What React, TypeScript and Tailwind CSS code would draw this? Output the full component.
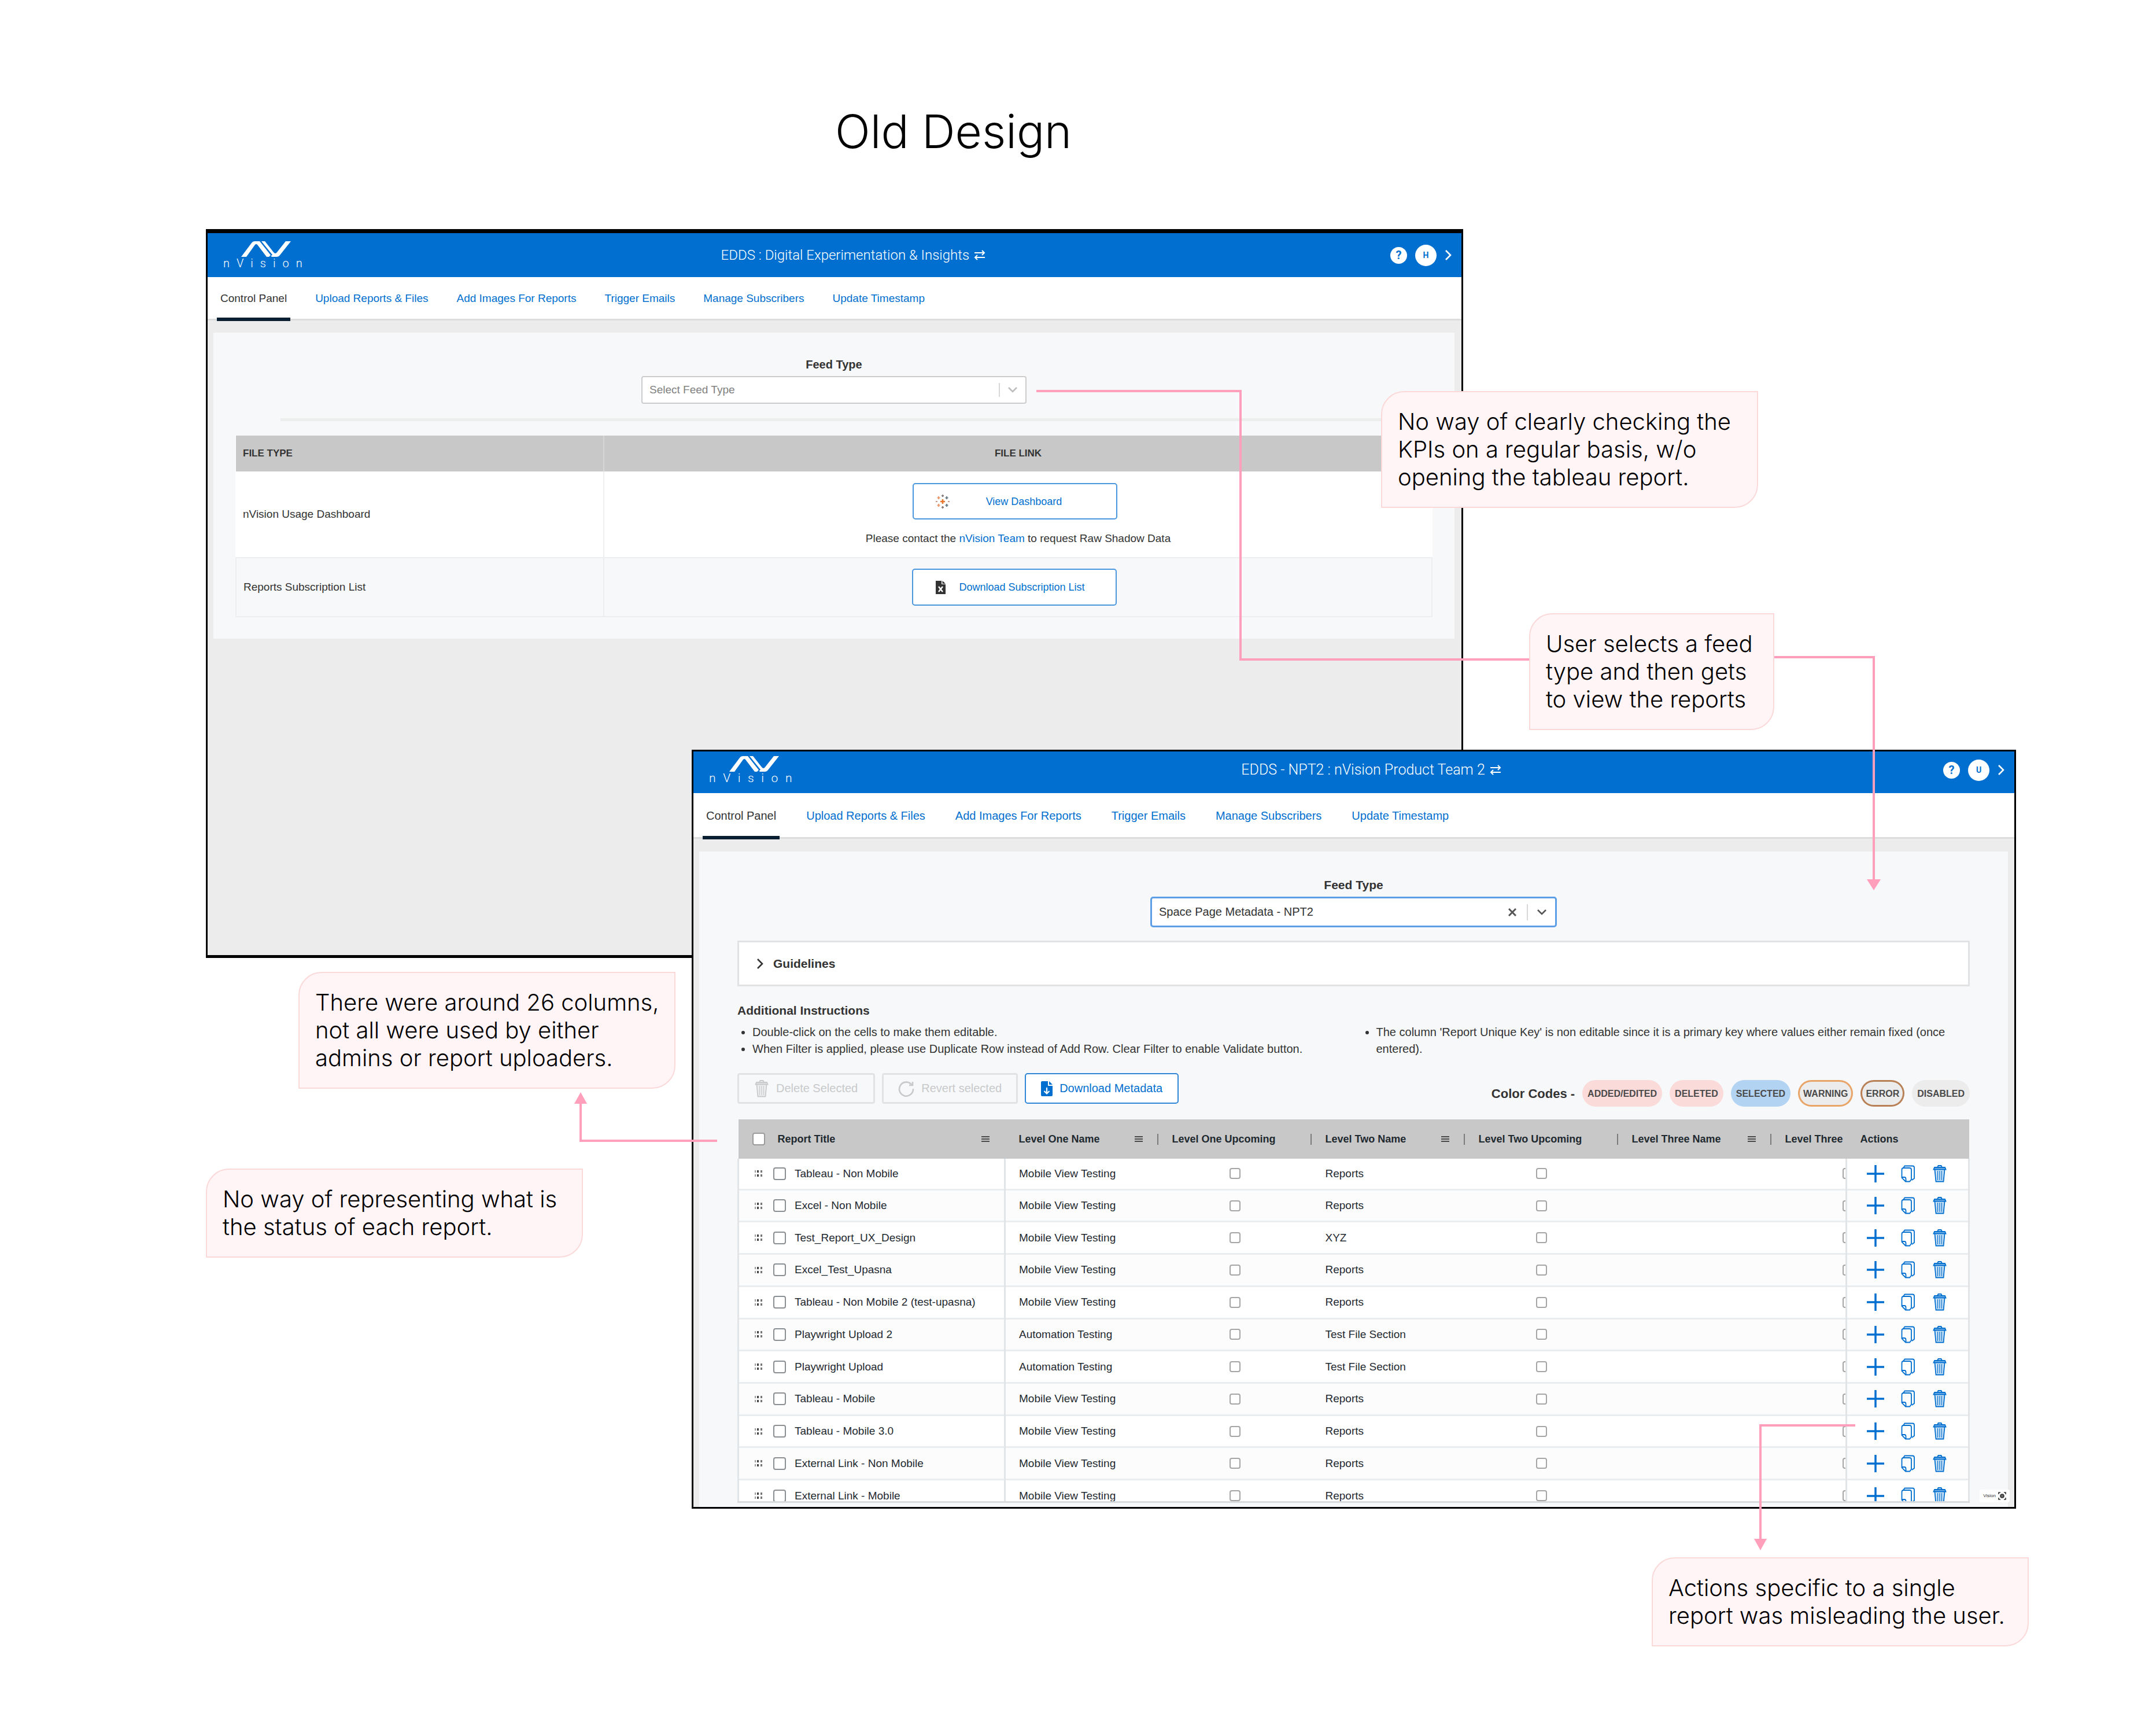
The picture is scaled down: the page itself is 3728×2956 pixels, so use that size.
import type { ReactNode } from 'react'

const NAV = [
  'Control Panel',
  'Upload Reports & Files',
  'Add Images For Reports',
  'Trigger Emails',
  'Manage Subscribers',
  'Update Timestamp',
]

const ROWS = [
  { title: 'Tableau - Non Mobile', one: 'Mobile View Testing', two: 'Reports' },
  { title: 'Excel - Non Mobile', one: 'Mobile View Testing', two: 'Reports' },
  { title: 'Test_Report_UX_Design', one: 'Mobile View Testing', two: 'XYZ' },
  { title: 'Excel_Test_Upasna', one: 'Mobile View Testing', two: 'Reports' },
  { title: 'Tableau - Non Mobile 2 (test-upasna)', one: 'Mobile View Testing', two: 'Reports' },
  { title: 'Playwright Upload 2', one: 'Automation Testing', two: 'Test File Section' },
  { title: 'Playwright Upload', one: 'Automation Testing', two: 'Test File Section' },
  { title: 'Tableau - Mobile', one: 'Mobile View Testing', two: 'Reports' },
  { title: 'Tableau - Mobile 3.0', one: 'Mobile View Testing', two: 'Reports' },
  { title: 'External Link - Non Mobile', one: 'Mobile View Testing', two: 'Reports' },
  { title: 'External Link - Mobile', one: 'Mobile View Testing', two: 'Reports' },
]

const COLOR_CODES = [
  { label: 'ADDED/EDITED', className: 'bg-[#fbdada]' },
  { label: 'DELETED', className: 'bg-[#fbdada]' },
  { label: 'SELECTED', className: 'bg-[#b3d3f3]' },
  { label: 'WARNING', className: 'bg-[#ececec] ring-3 ring-inset ring-[#e9a468]' },
  { label: 'ERROR', className: 'bg-[#ececec] ring-3 ring-inset ring-[#b98056]' },
  { label: 'DISABLED', className: 'bg-[#ececec]' },
]

function Logo({ className }: { className: string }) {
  return (
    <div className={`flex flex-col items-center text-white ${className}`}>
      <svg viewBox="0 0 86 27" className="w-[86px] h-[27px]" fill="currentColor" aria-hidden="true">
        <path d="M0 27 L18 3 Q20 0 24 0 H32 L51 24 L48 27 H44 L28 6 Q26 4 24 6 L9 27 Z" />
        <path d="M35 0 H41 L56 19 Q59 23 62 19 L77 0 H86 L67 24 Q65 27 61 27 H53 L51.500 25.500 L54 23.500 Z" />
      </svg>
      <span className="leading-[22px] font-light tracking-[0.6em]">nVision</span>
    </div>
  )
}

function SwapIcon() {
  return (
    <svg
      viewBox="0 0 20 18"
      className="w-[20px] h-[18px]"
      fill="none"
      stroke="currentColor"
      strokeWidth="2"
      aria-hidden="true"
    >
      <path d="M1 5 H18 M14 1 L18 5 L14 9" />
      <path d="M19 13 H2 M6 9 L2 13 L6 17" />
    </svg>
  )
}

function Chevron() {
  return (
    <svg viewBox="0 0 12 20" className="w-[12px] h-[20px]" fill="none" stroke="currentColor" strokeWidth="2.600" aria-hidden="true">
      <path d="M2 2 L10 10 L2 18" />
    </svg>
  )
}

function ChevronDown() {
  return (
    <svg viewBox="0 0 16 10" className="w-[16px] h-[10px]" fill="none" stroke="currentColor" strokeWidth="2.600" aria-hidden="true">
      <path d="M1 1 L8 8 L15 1" />
    </svg>
  )
}

function AppHeader({
  title,
  initial,
  className,
  logoClassName,
}: {
  title: string
  initial: string
  className: string
  logoClassName: string
}) {
  return (
    <header
      className={`flex items-center justify-between bg-[#006fcf] pl-[27px] pr-[17px] font-['Roboto',sans-serif] text-white ${className}`}
    >
      <Logo className={logoClassName} />
      <button className="flex items-center gap-2 leading-7 font-light">
        {title}
        <SwapIcon />
      </button>
      <div className="flex items-center gap-[14px]">
        <button className="w-[29px] h-[29px] rounded-full bg-white text-[#006fcf] text-[20px] leading-[29px] font-bold">?</button>
        <button className="w-[37px] h-[37px] rounded-full bg-white text-[#006fcf] text-[14px] leading-[37px] font-bold">
          {initial}
        </button>
        <Chevron />
      </div>
    </header>
  )
}

function NavTabs({ className }: { className: string }) {
  return (
    <nav className={`flex items-stretch bg-white border-b-3 border-[#dcdcdc] pl-[16px] text-[#006fcf] ${className}`}>
      {NAV.map((item, i) => (
        <a
          key={item}
          href="#"
          className={`-mb-[4px] flex items-center px-[6px] whitespace-nowrap border-b-6 pt-1 ${
            i === 0 ? 'border-[#0b1f33] text-[#333333]' : 'border-transparent'
          }`}
        >
          {item}
        </a>
      ))}
    </nav>
  )
}

function ControlPanelWindow() {
  return (
    <section className="absolute left-[356px] top-[396px] w-[2174px] h-[1260px] bg-[#ececec] border-x-3 border-t-7 border-b-5 border-black text-[19px] leading-6 text-[#333333]">
      <AppHeader
        title="EDDS : Digital Experimentation & Insights"
        initial="H"
        className="h-[76px] text-[24px]"
        logoClassName="mr-3 text-[20px]"
      />
      <NavTabs className="h-[75px] gap-[37px]" />

      <div className="ml-[10px] mr-[12px] mt-[21px] bg-[#f7f8fa] px-[38px] pt-[43px] pb-[37px]">
        <div className="flex flex-col items-center">
          <label htmlFor="feed-1" className="text-[20px] font-bold">
            Feed Type
          </label>
          <div className="relative mt-2 w-[666px]">
            <select
              id="feed-1"
              className="w-full h-[48px] appearance-none rounded-sm border-2 border-[#cccccc] bg-white pl-[12px] text-[#808080]"
            >
              <option>Select Feed Type</option>
            </select>
            <div className="pointer-events-none absolute inset-y-0 right-[16px] flex items-center gap-[14px] text-[#bdbdbd]">
              <span className="w-[2px] h-[24px] bg-[#d8d8d8]" />
              <ChevronDown />
            </div>
          </div>
        </div>

        <hr className="mt-[25px] mx-[78px] border-t-5 border-[#eceded]" />

        <table className="mt-[25px] w-full border-collapse bg-white">
          <thead className="bg-[#c8c8c8] text-[17px]">
            <tr className="h-[62px]">
              <th className="w-[636px] pl-[12px] text-left border-r-2 border-[#d6d6d6]">FILE TYPE</th>
              <th>FILE LINK</th>
            </tr>
          </thead>
          <tbody>
            <tr className="h-[149px]">
              <td className="pl-[12px] border-r-2 border-[#eceeef]">nVision Usage Dashboard</td>
              <td className="text-center">
                <button className="mr-3 inline-flex w-[354px] h-[63px] items-center rounded-[5px] border-2 border-[#4a97df] bg-white pl-[38px] text-[18px] text-[#006fcf]">
                  <TableauIcon />
                  <span className="flex-1 pr-[30px]">View Dashboard</span>
                </button>
                <p className="mt-[21px]">
                  Please contact the{' '}
                  <a href="#" className="text-[#006fcf]">
                    nVision Team
                  </a>{' '}
                  to request Raw Shadow Data
                </p>
              </td>
            </tr>
            <tr className="h-[102px] border-2 border-[#eceeef] bg-[#f7f8fa]">
              <td className="pl-[12px] border-r-2 border-[#eceeef]">Reports Subscription List</td>
              <td className="text-center">
                <button className="mr-3 inline-flex w-[354px] h-[64px] items-center rounded-[5px] border-2 border-[#4a97df] bg-white pl-[38px] text-[18px] text-[#006fcf]">
                  <ExcelIcon />
                  <span className="flex-1 pr-[30px]">Download Subscription List</span>
                </button>
              </td>
            </tr>
          </tbody>
        </table>
      </div>
    </section>
  )
}

function TableauIcon() {
  return (
    <svg viewBox="0 0 24 24" className="w-[24px] h-[24px]" fill="none" strokeWidth="2" aria-hidden="true">
      <path d="M12 8 V16 M8 12 H16" stroke="#e8762d" strokeWidth="2.600" />
      <path d="M5 3 V8 M2.500 5.500 H7.500 M5 16 V21 M2.500 18.500 H7.500" stroke="#eb9a6e" />
      <path d="M19 3 V8 M16.500 5.500 H21.500 M19 16 V21 M16.500 18.500 H21.500" stroke="#6d7f88" />
      <path d="M12 0 V4 M10 2 H14 M12 20 V24 M10 22 H14" stroke="#8d8080" />
      <path d="M0 12 H3 M21 12 H24" stroke="#c79a8a" />
    </svg>
  )
}

function ExcelIcon() {
  return (
    <svg viewBox="0 0 18 23" className="w-[18px] h-[23px]" aria-hidden="true">
      <path d="M1 0 H11 V6 H18 V23 H1 Z" fill="#333333" />
      <path d="M12.500 0 L18 5 H12.500 Z" fill="#333333" />
      <path d="M6 10 L13 19 M13 10 L6 19" stroke="white" strokeWidth="2.400" />
    </svg>
  )
}

function TrashIcon() {
  return (
    <svg viewBox="0 0 24 30" className="w-[24px] h-[30px]" fill="none" stroke="currentColor" strokeWidth="1.800" aria-hidden="true">
      <path d="M8 4 L9.500 1 H14.500 L16 4" />
      <path d="M1.500 7.500 L3 4 H21 L22.500 7.500 Z" fill="currentColor" fillOpacity="0.5" />
      <path d="M3.500 8 L5.500 28.500 H18.500 L20.500 8" fill="currentColor" fillOpacity="0.2" />
      <path d="M8.500 10 V26 M12 10 V26 M15.500 10 V26" strokeWidth="1.200" />
    </svg>
  )
}

function CopyIcon() {
  return (
    <svg viewBox="0 0 24 30" className="w-[24px] h-[30px]" fill="none" stroke="currentColor" strokeWidth="1.800" aria-hidden="true">
      <path d="M4 5 L6.500 1.500 H20 Q23 1.500 23 4.500 V23 L19 26" />
      <path d="M1.500 8 Q1.500 5 4.500 5 H15 Q18 5 18 8 V25 L15 28.500 H8 L1.500 22 Z" />
      <path d="M1.500 21 H6 Q8.500 21 8.500 24 V28" />
    </svg>
  )
}

function Checkbox({ label, className }: { label: string; className: string }) {
  return (
    <input
      type="checkbox"
      aria-label={label}
      className={`block shrink-0 appearance-none rounded-[4px] border-2 bg-white ${className}`}
    />
  )
}

function MenuIcon() {
  return (
    <svg viewBox="0 0 14 12" className="w-[14px] h-[12px]" stroke="#4a4a4a" strokeWidth="2" aria-hidden="true">
      <path d="M0 2 H14 M0 6 H14 M0 10 H14" />
    </svg>
  )
}

function ColumnHead({ children, menu }: { children: ReactNode; menu?: boolean }) {
  return (
    <th className="p-0 text-left">
      <div className="flex items-center w-[265px] pl-[24px]">
        <span className="flex-1">{children}</span>
        {menu && <MenuIcon />}
        <span className="ml-[25px] w-[2px] h-[19px] bg-[#7b7b7b]" />
      </div>
    </th>
  )
}

function ReportsGrid() {
  return (
    <div className="mt-[22px] h-[663px] overflow-hidden border-b-3 border-[#d9dcde]">
      <table className="w-full h-[680px] table-fixed border-collapse">
        <colgroup>
          <col />
          <col className="w-[265px]" />
          <col className="w-[265px]" />
          <col className="w-[265px]" />
          <col className="w-[265px]" />
          <col className="w-[265px]" />
          <col className="w-[130px]" />
          <col className="w-[212px]" />
        </colgroup>
        <thead className="bg-[#c8c8c8] text-[18px] text-[#1f2930]">
          <tr className="h-[68px]">
            <th className="p-0 text-left">
              <div className="flex items-center pl-[24px] pr-[27px]">
                <Checkbox label="Select all reports" className="w-[22px] h-[22px] border-[#9b9b9b]" />
                <span className="ml-[22px] flex-1">Report Title</span>
                <MenuIcon />
              </div>
            </th>
            <ColumnHead menu>Level One Name</ColumnHead>
            <ColumnHead>Level One Upcoming</ColumnHead>
            <ColumnHead menu>Level Two Name</ColumnHead>
            <ColumnHead>Level Two Upcoming</ColumnHead>
            <ColumnHead menu>Level Three Name</ColumnHead>
            <th className="p-0 pl-[24px] text-left whitespace-nowrap">Level Three</th>
            <th className="pl-[24px] text-left">Actions</th>
          </tr>
        </thead>
        <tbody className="text-[19px] leading-6 text-[#1f2930]">
          {ROWS.map((row) => (
            <tr key={row.title} className="bg-white even:bg-[#fcfcfc] border-b-3 border-[#e9edf0]">
              <td className="p-0 border-x-3 border-[#e2e5e8]">
                <div className="flex items-center pl-[26px]">
                  <svg viewBox="0 0 15 11" className="w-[15px] h-[11px]" aria-hidden="true">
                    <path d="M5 0 H8 V4 H5 Z M5 7 H8 V11 H5 Z" fill="#444444" />
                    <path d="M1 0 H3 V4 H1 Z M1 7 H3 V11 H1 Z" fill="#999999" />
                    <path d="M11 0 H14 V4 H11 Z M11 7 H14 V11 H11 Z" fill="#777777" />
                  </svg>
                  <Checkbox label={`Select ${row.title}`} className="ml-[18px] w-[22px] h-[22px] border-[#8a8f93]" />
                  <span className="ml-[15px] whitespace-nowrap">{row.title}</span>
                </div>
              </td>
              <td className="pl-[23px]">{row.one}</td>
              <td className="p-0">
                <Checkbox label="Level one upcoming" className="mx-auto w-[19px] h-[19px] border-[#a5a5a5]" />
              </td>
              <td className="pl-[24px]">{row.two}</td>
              <td className="p-0">
                <Checkbox label="Level two upcoming" className="mx-auto w-[19px] h-[19px] border-[#a5a5a5]" />
              </td>
              <td />
              <td className="p-0 overflow-hidden">
                <div className="w-[265px]">
                  <Checkbox label="Level three upcoming" className="mx-auto w-[19px] h-[19px] border-[#a5a5a5]" />
                </div>
              </td>
              <td className="p-0 border-x-3 border-[#e2e5e8]">
                <div className="flex items-center pl-[34px] text-[#006fcf]">
                  <button aria-label="Add row">
                    <svg viewBox="0 0 30 30" className="block w-[30px] h-[30px]" stroke="currentColor" strokeWidth="3.500" aria-hidden="true">
                      <path d="M15 0 V30 M0 15 H30" />
                    </svg>
                  </button>
                  <button aria-label="Duplicate row" className="ml-[29px]">
                    <CopyIcon />
                  </button>
                  <button aria-label="Delete row" className="ml-[31px]">
                    <TrashIcon />
                  </button>
                </div>
              </td>
            </tr>
          ))}
        </tbody>
      </table>
    </div>
  )
}

function MetadataWindow() {
  return (
    <section className="absolute left-[1196px] top-[1296px] w-[2290px] h-[1312px] overflow-hidden bg-[#ececec] border-3 border-black text-[20px] leading-[29px] text-[#333333]">
      <AppHeader
        title="EDDS - NPT2 : nVision Product Team 2"
        initial="U"
        className="h-[72px] pb-2 text-[25px]"
        logoClassName="text-[21px]"
      />
      <NavTabs className="h-[79px] gap-[40px]" />

      <div className="ml-[10px] mr-[11px] mt-[22px] h-full bg-[#f7f8fa] px-[66px] pt-[43px]">
        <div className="flex flex-col items-center">
          <label htmlFor="feed-2" className="text-[21px] font-bold">
            Feed Type
          </label>
          <div className="relative mt-[6px] w-[703px]">
            <select
              id="feed-2"
              className="w-full h-[53px] appearance-none rounded-[5px] border-3 border-[#5c9fe6] bg-white pl-[12px]"
            >
              <option>Space Page Metadata - NPT2</option>
            </select>
            <div className="pointer-events-none absolute inset-y-0 right-[18px] flex items-center gap-[16px] text-[#555555]">
              <svg viewBox="0 0 14 14" className="mr-[2px] w-[14px] h-[14px]" stroke="currentColor" strokeWidth="3" aria-hidden="true">
                <path d="M1 1 L13 13 M13 1 L1 13" />
              </svg>
              <span className="w-[2px] h-[28px] bg-[#d8d8d8]" />
              <ChevronDown />
            </div>
          </div>
        </div>

        <button className="mt-[23px] flex w-full h-[79px] items-center gap-[17px] border-3 border-[#e0e2e4] bg-white pl-[30px] text-[21px] font-bold">
          <Chevron />
          Guidelines
        </button>

        <h2 className="mt-[27px] text-[21px] font-bold">Additional Instructions</h2>
        <div className="mt-[9px] grid grid-cols-2 gap-[26px]">
          <ul className="list-disc pl-[26px]">
            <li>Double-click on the cells to make them editable.</li>
            <li>When Filter is applied, please use Duplicate Row instead of Add Row. Clear Filter to enable Validate button.</li>
          </ul>
          <ul className="list-disc pl-[26px]">
            <li>The column 'Report Unique Key' is non editable since it is a primary key where values either remain fixed (once entered).</li>
          </ul>
        </div>

        <div className="mt-[27px] flex items-start justify-between">
          <div className="flex gap-[12px]">
            <button disabled className="flex h-[53px] items-center gap-[13px] rounded-[4px] border-3 border-[#e0e2e4] px-[27px] text-[#c8c9ca]">
              <TrashIcon />
              Delete Selected
            </button>
            <button disabled className="flex h-[53px] items-center gap-[12px] rounded-[4px] border-3 border-[#e0e2e4] px-[25px] text-[#c8c9ca]">
              <svg viewBox="0 0 28 28" className="w-[28px] h-[28px]" fill="none" stroke="currentColor" strokeWidth="2.600" aria-hidden="true">
                <path d="M24 8 A12 12 0 1 0 26 14" />
                <path d="M25 2 V8 H19" />
              </svg>
              Revert selected
            </button>
            <button className="flex h-[53px] items-center gap-[12px] rounded-[5px] border-2 border-[#2f86d9] bg-white px-[26px] text-[#006fcf]">
              <svg viewBox="0 0 20 26" className="w-[20px] h-[26px]" aria-hidden="true">
                <path d="M2 0 H12 V8 H20 V24 Q20 26 18 26 H2 Q0 26 0 24 V2 Q0 0 2 0 Z" fill="#006fcf" />
                <path d="M14 0 L20 6 H14 Z" fill="#006fcf" />
                <path d="M10 11 V21 M5.500 17 L10 21.500 L14.500 17" fill="none" stroke="white" strokeWidth="2.200" />
              </svg>
              Download Metadata
            </button>
          </div>
          <div className="mt-[12px] flex items-center gap-[13px]">
            <span className="text-[22px] font-bold">Color Codes -</span>
            {COLOR_CODES.map((code) => (
              <span
                key={code.label}
                className={`flex h-[46px] items-center rounded-full px-[9px] text-[16px] font-bold text-[#4a4a4a] ${code.className}`}
              >
                {code.label}
              </span>
            ))}
          </div>
        </div>

        <ReportsGrid />
      </div>

      {/* floating status chip in the corner of the window */}
      <div className="absolute right-[8px] bottom-[8px] flex h-[22px] items-center gap-1 rounded-sm bg-white px-[6px] text-[8px] leading-3">
        Vision
        <svg viewBox="0 0 14 14" className="w-[14px] h-[14px]" fill="none" stroke="#333333" strokeWidth="1.600" aria-hidden="true">
          <path d="M1 4 V1 H4 M10 1 H13 V4 M13 10 V13 H10 M4 13 H1 V10" />
          <circle cx="7" cy="7" r="3" fill="#666666" />
        </svg>
      </div>
    </section>
  )
}

function Callout({ className, children }: { className: string; children: ReactNode }) {
  return (
    <p
      className={`absolute rounded-tl-[40px] rounded-br-[40px] border-2 border-[#fbd9d9] bg-[#fff4f6] py-[27px] pl-[27px] pr-4 font-['Inter',sans-serif] text-[40px] leading-[48px] font-light text-black ${className}`}
    >
      {children}
    </p>
  )
}

function Connectors() {
  return (
    <svg className="pointer-events-none absolute inset-0 w-full h-full" aria-hidden="true">
      <g fill="none" stroke="#ff9fbc" strokeWidth="4">
        <path d="M1792 676 H2145 V1140 H2644" />
        <path d="M3068 1136 H3240 V1522" />
        <path d="M1240 1972 H1004 V1906" />
        <path d="M3208 2464 H3044 V2662" />
      </g>
      <g fill="#ff9fbc">
        <path d="M3228 1520 H3252 L3240 1539 Z" />
        <path d="M993 1908 H1015 L1004 1888 Z" />
        <path d="M3033 2660 H3055 L3044 2680 Z" />
      </g>
    </svg>
  )
}

export default function App() {
  return (
    <main className="relative min-h-screen overflow-hidden bg-white font-['Liberation_Sans',sans-serif]">
      <h1 className="absolute left-[1444px] top-[179px] font-['Inter',sans-serif] text-[80px] leading-[96px] font-light text-black">
        Old Design
      </h1>

      <ControlPanelWindow />
      <MetadataWindow />
      <Connectors />

      <Callout className="left-[2388px] top-[676px] w-[652px]">
        No way of clearly checking the KPIs on a regular basis, w/o opening the tableau report.
      </Callout>
      <Callout className="left-[2644px] top-[1060px] w-[424px]">
        User selects a feed type and then gets to view the reports
      </Callout>
      <Callout className="left-[516px] top-[1680px] w-[652px]">
        There were around 26 columns, not all were used by either admins or report uploaders.
      </Callout>
      <Callout className="left-[356px] top-[2020px] w-[652px]">
        No way of representing what is the status of each report.
      </Callout>
      <Callout className="left-[2856px] top-[2692px] w-[652px]">
        Actions specific to a single report was misleading the user.
      </Callout>
    </main>
  )
}
